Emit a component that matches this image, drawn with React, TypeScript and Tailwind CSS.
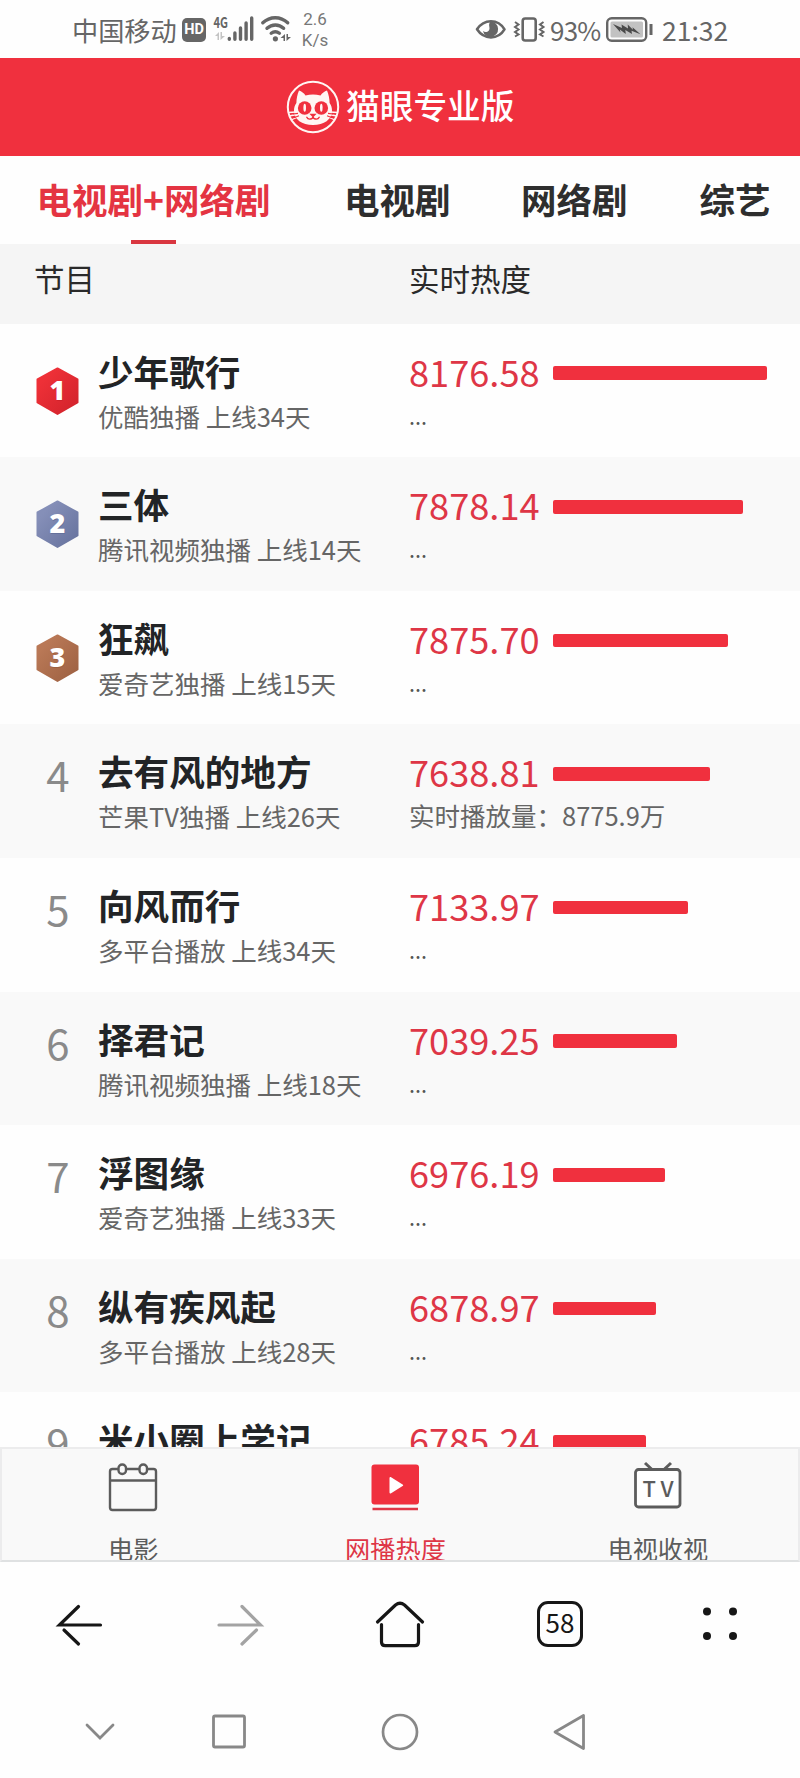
/**
 * Mobile ranking screen: live heat of TV and web dramas, shown inside an
 * in-app browser with the phone's status bar on top and system keys below.
 */
import type { ReactNode } from 'react'

interface Show {
  readonly rank: number
  readonly name: string
  readonly info: string
  readonly heat: string
  /** Bar length in px, relative to the leader. */
  readonly bar: number
  readonly plays?: string
}

const SHOWS: readonly Show[] = [
  { rank: 1, name: '少年歌行', info: '优酷独播 上线34天', heat: '8176.58', bar: 214 },
  { rank: 2, name: '三体', info: '腾讯视频独播 上线14天', heat: '7878.14', bar: 190.5 },
  { rank: 3, name: '狂飙', info: '爱奇艺独播 上线15天', heat: '7875.70', bar: 175.5 },
  { rank: 4, name: '去有风的地方', info: '芒果TV独播 上线26天', heat: '7638.81', bar: 157, plays: '实时播放量：8775.9万' },
  { rank: 5, name: '向风而行', info: '多平台播放 上线34天', heat: '7133.97', bar: 135.5 },
  { rank: 6, name: '择君记', info: '腾讯视频独播 上线18天', heat: '7039.25', bar: 124 },
  { rank: 7, name: '浮图缘', info: '爱奇艺独播 上线33天', heat: '6976.19', bar: 112.5 },
  { rank: 8, name: '纵有疾风起', info: '多平台播放 上线28天', heat: '6878.97', bar: 103 },
  { rank: 9, name: '米小圈上学记', info: '多平台播放 上线20天', heat: '6785.24', bar: 93 }
]

// Medal gradients for the top three, light edge first.
const MEDALS: Record<number, readonly [string, string]> = {
  1: ['#ee3037', '#d0222b'],
  2: ['#858fb8', '#65719c'],
  3: ['#b97856', '#9c6041']
}

function StatusBar(): React.JSX.Element {
  return (
    <div className="flex h-[58px] shrink-0 items-center bg-[#fefefe] text-[#666]">
      <span className="ml-[72px] w-[108px] pt-[1px] text-[26.200px] leading-[58px] whitespace-nowrap">中国移动</span>
      <div className="mt-[2px] ml-[2px] flex h-[24px] w-[24px] items-center justify-center rounded-[5px] bg-[#666] font-[Roboto] text-[14.500px] leading-none font-bold text-[#fefefe]">
        HD
      </div>
      <svg className="ml-[7px] overflow-visible" width="42" height="58" viewBox="213 0 42 58">
        <text x="213.500" y="28" fontSize="15" fontWeight="700" fill="#666" textLength="14.500" lengthAdjust="spacingAndGlyphs">
          4G
        </text>
        <g fill="#c4c4c4">
          <path d="M215 36l4-4v8h-1.500v-4z" />
          <path d="M220.500 32v8l4.500-4h-3v-4z" />
        </g>
        <g stroke="#666" strokeWidth="3.400" strokeLinecap="round">
          <path d="M229.300 38.500v.8M234.900 33v6.300M240.500 28v11.300M246.100 23v16.300M251.700 18v21.300" />
        </g>
      </svg>
      <svg className="ml-[5px]" width="33" height="58" viewBox="260 0 33 58">
        <g fill="none" stroke="#666" strokeWidth="3.400" strokeLinecap="round">
          <path d="M262.800 22.800C270 16 280.500 16 287.700 22.800" />
          <path d="M267 28.300C272 23.800 278.800 23.800 283.600 28.300" />
          <path d="M271.200 33.300C273.800 31.200 276.800 31.200 279.400 33.300" />
        </g>
        <circle cx="275.400" cy="38.800" r="2.600" fill="#666" />
        <path d="M280.500 38l4.500-4v7h-1.500v-3zM286.500 34v7l4.500-4h-3v-3z" fill="#666" />
      </svg>
      <div className="ml-[7px] flex w-[30px] flex-col items-center pt-[2px] font-[Roboto] text-[17px] leading-[21px] text-[#777]">
        <span>2.6</span>
        <span>K/s</span>
      </div>
      <svg className="ml-[144px]" width="34" height="58" viewBox="474 0 34 58">
        <path d="M477 29.300C484 18.500 498 18.500 504.500 29.300C498 40 484 40 477 29.300z" fill="none" stroke="#666" strokeWidth="2.600" strokeLinejoin="round" />
        <path d="M490.500 21.500a7.700 7.700 0 1 1-7.600 9.500c3 2.500 7.600.3 6.400-4.300-.4-1.800-.3-3.700 1.200-5.200z" fill="#666" />
      </svg>
      <svg className="ml-[5px]" width="33" height="58" viewBox="513 0 33 58">
        <rect x="522.700" y="18.500" width="13" height="22" rx="2.500" fill="none" stroke="#666" strokeWidth="2.600" />
        <path
          d="M515 22l3.500 2.500-3.500 2.500 3.500 2.500-3.500 2.500 3.500 2.500-3.500 2M543.500 22l-3.500 2.500 3.500 2.500-3.500 2.500 3.500 2.500-3.500 2.500 3.500 2"
          fill="none"
          stroke="#666"
          strokeWidth="2"
        />
      </svg>
      <span className="ml-[4px] w-[52px] pt-[1px] text-[26px] leading-[56px] tracking-[-0.800px] whitespace-nowrap">93%</span>
      <svg className="ml-[4px]" width="48" height="58" viewBox="606 0 48 58">
        <rect x="607.200" y="18.200" width="39" height="22.500" rx="4.500" fill="none" stroke="#666" strokeWidth="2.400" />
        <rect x="610.500" y="21.500" width="32.500" height="16" rx="1.500" fill="#c2c2c2" />
        <path d="M613 24l9 4-.5-3.500 6.500 4-.3-4 5.300 5.300-.5-2.500 8 7-9-3.500.5 3.300-6.700-4 .5 4-6-4.500.7 3z" fill="#4a4a4a" />
        <path d="M651 24v11" stroke="#666" strokeWidth="3" />
      </svg>
      <span className="ml-[8px] pt-[1px] text-[26.500px] leading-[56px] whitespace-nowrap">21:32</span>
    </div>
  )
}

function CatLogo(): React.JSX.Element {
  return (
    <svg width="54" height="54" viewBox="0 0 54 54">
      <circle cx="27" cy="27" r="25.200" fill="none" stroke="#fff6f3" strokeWidth="2" />
      <path
        d="M13 10.500c2.500.8 5 2.700 6.500 5 5-1.300 10-1.300 15 0 1.500-2.300 4-4.200 6.500-5 1.700 4 2.600 8.500 2.600 12.500 1.600 2.500 2.400 4.500 2.400 7.500C46 39.500 38 45 27 45S8 39.500 8 30.500c0-3 .8-5 2.400-7.500 0-4 .9-8.500 2.600-12.500z"
        fill="#fff6f3"
      />
      <circle cx="18.700" cy="28" r="6.800" fill="#f0303e" />
      <circle cx="35.300" cy="28" r="6.800" fill="#f0303e" />
      <ellipse cx="18.700" cy="27.800" rx="1.300" ry="4" fill="#fff6f3" />
      <ellipse cx="35.300" cy="27.800" rx="1.300" ry="4" fill="#fff6f3" />
      <path d="M25 34.500h4l-2 2zM27 36.500c0 3-5 3.500-6.200.8M27 36.500c0 3 5 3.500 6.200.8" fill="none" stroke="#f0303e" strokeWidth="1.400" strokeLinecap="round" />
      <path d="M2 32.500l8-.5M3 36l8-1.500M5 40l7-3M52 32.500l-8-.5M51 36l-8-1.500M49 40l-7-3" stroke="#fff6f3" strokeWidth="1.300" />
      <path d="M7 34l5-.6M8 37.800l5-2M47 34l-5-.6M46 37.800l-5-2" stroke="#f0303e" strokeWidth="1.100" />
    </svg>
  )
}

function Medal({ rank }: { rank: number }): React.JSX.Element {
  const [light, dark] = MEDALS[rank]
  return (
    <svg className="mt-[42px]" width="44" height="50" viewBox="0 0 44 50">
      <defs>
        <linearGradient id={`medal-${rank}`} x1="0" y1="0" x2="1" y2="1">
          <stop offset="0.200" stopColor={light} />
          <stop offset="1" stopColor={dark} />
        </linearGradient>
      </defs>
      <path
        d="M21.500 2.500l20 11v23L21.500 48l-20-11.500v-23z"
        fill={`url(#medal-${rank})`}
        stroke={`url(#medal-${rank})`}
        strokeWidth="2"
        strokeLinejoin="round"
      />
      <text x="22" y="35" textAnchor="middle" fontSize="27" fontWeight="900" fill={dark} className="font-['Noto_Sans']">
        {rank}
      </text>
      <text x="21.500" y="33.500" textAnchor="middle" fontSize="27" fontWeight="900" fill="#fff" className="font-['Noto_Sans']">
        {rank}
      </text>
    </svg>
  )
}

function ShowRow({ show }: { show: Show }): React.JSX.Element {
  return (
    <li className="flex h-[133.600px] shrink-0 odd:bg-[#fefefe] even:bg-[#f9f9f9]">
      <div className="ml-[36px] flex w-[44px] justify-center">
        {show.rank <= 3 ? (
          <Medal rank={show.rank} />
        ) : (
          <span className="mt-[21px] text-[42px] leading-[58px] text-[#8a8a8a]">{show.rank}</span>
        )}
      </div>
      <div className="ml-[18px] flex w-[311px] flex-col pt-[25px] whitespace-nowrap">
        <span className="text-[35.600px] leading-[44px] font-bold text-[#222426]">{show.name}</span>
        <span className="mt-[6px] text-[25.500px] leading-[34px] text-[#666]">{show.info}</span>
      </div>
      <div className="flex flex-col pt-[25px] whitespace-nowrap">
        <div className="flex h-[44px] items-center">
          <span className="w-[143.700px] pt-[1px] text-[36.200px] leading-[45px] text-[#de3646]">{show.heat}</span>
          <span className="mt-[5px] h-[13.600px] rounded-[2px] bg-[#f0303e]" style={{ width: show.bar }} />
        </div>
        {show.plays !== undefined ? (
          <span className="mt-[5px] text-[25.500px] leading-[34px] text-[#666]">{show.plays}</span>
        ) : (
          <span className="mt-[6px] text-[21.500px] leading-[34px] text-[#555]">...</span>
        )}
      </div>
    </li>
  )
}

function FooterTab({ label, active, children }: { label: string; active?: boolean; children: ReactNode }): React.JSX.Element {
  return (
    <div className={`flex flex-1 flex-col items-center ${active ? 'text-[#de3646]' : 'text-[#5c5c5c]'}`}>
      <div className="h-[60px] shrink-0">{children}</div>
      <span className="mt-[11px] shrink-0 text-[25.200px] leading-[38px] whitespace-nowrap">{label}</span>
    </div>
  )
}

export default function App(): React.JSX.Element {
  return (
    <div className="flex h-[1778px] w-[800px] flex-col overflow-hidden bg-[#fefefe] font-['Noto_Sans_CJK_SC',sans-serif]">
      <StatusBar />

      <header className="flex h-[97.500px] shrink-0 items-center bg-[#f0303e] pl-[286px]">
        <CatLogo />
        <h1 className="ml-[6px] pb-[3px] text-[33.700px] font-medium whitespace-nowrap text-white">猫眼专业版</h1>
      </header>

      <nav className="flex h-[88.500px] shrink-0 items-stretch overflow-hidden pl-[36px] text-[35.500px] leading-[85px] font-bold whitespace-nowrap text-[#2e2e2e]">
        <div className="flex w-[235px] flex-col items-center text-[#e43442]">
          <span className="h-[84px]">电视剧+网络剧</span>
          <span className="h-[4.500px] w-[45px] bg-[#d93640]" />
        </div>
        <span className="ml-[73px]">电视剧</span>
        <span className="ml-[70.500px]">网络剧</span>
        <span className="ml-[72px]">综艺</span>
      </nav>

      <div className="flex h-[79.700px] shrink-0 bg-[#f5f5f5] pl-[34px] text-[30.500px] leading-[68px] text-[#2a2a2a]">
        <span className="w-[375px]">节目</span>
        <span>实时热度</span>
      </div>

      <ul className="flex h-[1123px] shrink-0 flex-col overflow-hidden">
        {SHOWS.map((show) => (
          <ShowRow key={show.rank} show={show} />
        ))}
      </ul>

      <div className="flex h-[115.500px] shrink-0 overflow-hidden border-2 border-[#ececed] border-b-[#dfe1e2] bg-[#f9f9f9] pt-[9px] pr-[9px]">
        <FooterTab label="电影">
          <svg width="60" height="60" viewBox="0 0 60 60" fill="none" stroke="#5c5c5c" strokeWidth="2.400">
            <rect x="7" y="11" width="46" height="41" rx="2.500" />
            <path d="M7 22.500h46" />
            <rect x="15.500" y="6.500" width="7.500" height="9.500" rx="3.700" fill="#f9f9f9" />
            <rect x="36.500" y="6.500" width="7.500" height="9.500" rx="3.700" fill="#f9f9f9" />
          </svg>
        </FooterTab>
        <FooterTab label="网播热度" active>
          <svg width="60" height="60" viewBox="0 0 60 60">
            <rect x="6.500" y="6.500" width="47.500" height="40" rx="3" fill="#f0303e" />
            <path d="M24.500 20v14.500c0 1 .8 1.300 1.600.8l11.500-7.200c.8-.5.8-1.200 0-1.700l-11.500-7.200c-.8-.5-1.600-.2-1.600.8z" fill="#fff" />
            <path d="M7.500 51h45.500" stroke="#de3646" strokeWidth="2.600" />
          </svg>
        </FooterTab>
        <FooterTab label="电视收视">
          <svg width="60" height="60" viewBox="0 0 60 60" fill="none" stroke="#5c5c5c" strokeWidth="2.800">
            <rect x="7.500" y="11.500" width="44.500" height="37.500" rx="3" fill="#fff" />
            <path d="M17 5l7 6.500M43 5l-7 6.500" strokeWidth="3" />
            <text x="14.500" y="38.500" fontSize="22" fontWeight="500" textLength="31" stroke="none" fill="#5c5c5c">
              TV
            </text>
          </svg>
        </FooterTab>
      </div>

      {/* Browser toolbar */}
      <div className="flex h-[124px] shrink-0 items-center">
        <div className="flex flex-1 justify-center">
          <svg width="50" height="50" viewBox="0 0 50 50" fill="none" stroke="#161616" strokeWidth="3.200" strokeLinecap="round">
            <path d="M45.500 26H4.500L23.500 7.500M9 31l14.500 14" />
          </svg>
        </div>
        <div className="flex flex-1 justify-center">
          <svg width="50" height="50" viewBox="0 0 50 50" fill="none" stroke="#a3a3a3" strokeWidth="3.200" strokeLinecap="round">
            <path d="M4 26h41.500L27 7.500M41.500 31L27 45" />
          </svg>
        </div>
        <div className="flex flex-1 justify-center">
          <svg width="50" height="50" viewBox="0 0 50 50" fill="none" stroke="#161616" strokeWidth="3.200" strokeLinecap="round" strokeLinejoin="round">
            <path d="M2.500 23L20.500 6Q25 2.500 29.500 6L47.500 23" />
            <path d="M6.500 25.500v17.500q0 3.700 3.700 3.700h29.600q3.700 0 3.700-3.700V25.500" />
          </svg>
        </div>
        <div className="flex flex-1 justify-center">
          <div className="flex h-[46px] w-[46px] items-center justify-center rounded-[11px] border-[3px] border-[#161616] pb-[4px] text-[26px] leading-none text-[#161616]">
            58
          </div>
        </div>
        <div className="flex flex-1 justify-center">
          <svg width="50" height="50" viewBox="0 0 50 50" fill="#161616">
            <circle cx="12" cy="12.500" r="4" />
            <circle cx="38" cy="12.500" r="4" />
            <circle cx="12" cy="37" r="4" />
            <circle cx="38" cy="37" r="4" />
          </svg>
        </div>
      </div>

      {/* System navigation keys */}
      <div className="flex h-[92px] shrink-0 items-center gap-[110px] pb-[1px] pl-[80px]">
        <svg className="w-[40px]" height="40" viewBox="0 0 40 40" fill="none" stroke="#888" strokeWidth="2.800" strokeLinecap="round">
          <path d="M7 13l13 13 13-13" />
        </svg>
        <svg className="ml-[-18px] w-[36px]" height="40" viewBox="0 0 36 40" fill="none" stroke="#888" strokeWidth="2.800">
          <rect x="1.500" y="4" width="31" height="31" rx="1.500" />
        </svg>
        <svg className="ml-[22px] w-[40px]" height="40" viewBox="0 0 40 40" fill="none" stroke="#888" strokeWidth="2.700">
          <circle cx="20" cy="20" r="17" />
        </svg>
        <svg className="ml-[21px] w-[36px]" height="40" viewBox="0 0 36 40" fill="none" stroke="#888" strokeWidth="2.800" strokeLinejoin="round">
          <path d="M32.500 3.500v33L4 20z" />
        </svg>
      </div>
    </div>
  )
}
